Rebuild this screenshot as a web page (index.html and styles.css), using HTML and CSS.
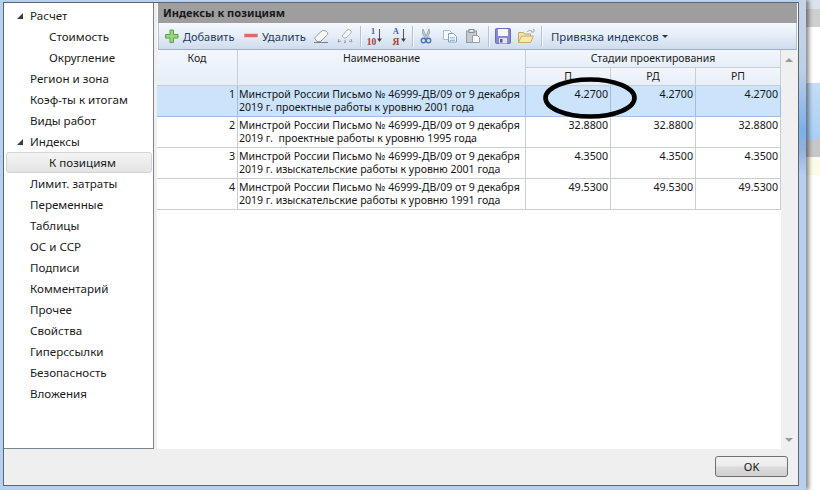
FILE: index.html
```html
<!DOCTYPE html>
<html lang="ru">
<head>
<meta charset="utf-8">
<title>Индексы к позициям</title>
<link rel="stylesheet" href="styles.css">
</head>
<body>
<div class="window">
  <div class="dialog">
    <div class="main">
      <nav class="tree">
        <div class="node"><span class="arrow"></span>Расчет</div>
        <div class="node child">Стоимость</div>
        <div class="node child">Округление</div>
        <div class="node">Регион и зона</div>
        <div class="node">Коэф-ты к итогам</div>
        <div class="node">Виды работ</div>
        <div class="node"><span class="arrow"></span>Индексы</div>
        <div class="node child current">К позициям</div>
        <div class="node">Лимит. затраты</div>
        <div class="node">Переменные</div>
        <div class="node">Таблицы</div>
        <div class="node">ОС и ССР</div>
        <div class="node">Подписи</div>
        <div class="node">Комментарий</div>
        <div class="node">Прочее</div>
        <div class="node">Свойства</div>
        <div class="node">Гиперссылки</div>
        <div class="node">Безопасность</div>
        <div class="node">Вложения</div>
      </nav>
      <section class="panel">
        <h1 class="panel-title">Индексы к позициям</h1>
        <div class="toolbar">
          <svg class="icon g-start" viewBox="0 0 16 16"><path d="M6 2h3.500v4.500H14V10H9.500v4.500H6V10H1.500V6.500H6z" fill="#9ad67a" stroke="#5fa04a"/></svg>
          <span class="label label-add">Добавить</span>
          <svg class="icon g8" viewBox="0 0 16 16"><rect x="1.500" y="6" width="13" height="3" fill="#e8605a" stroke="#d98a86" stroke-width=".6"/></svg>
          <span class="label label-del">Удалить</span>
          <svg class="icon g7" viewBox="0 0 16 16"><path d="M1.500 10l7-7q2-1 4.500 0l1.500 1.500q1 2-1 3l-6 6H4z" fill="#f6f6f6" stroke="#9a9fa6"/><path d="M1 14.500h14" stroke="#7b8088"/></svg>
          <svg class="icon g8" viewBox="0 0 16 16"><path d="M5 8l5-6q2-1 3 0l1 1q1 2-1 3l-4 4H7z" fill="#f6f6f6" stroke="#b0b4ba"/><path d="M2 11l-1 3 3-1M8 12v3M7 14l1 1 1-1M14 11l1 3-3-1" fill="none" stroke="#989da4"/></svg>
          <span class="sep g7"></span>
          <svg class="icon g5" viewBox="0 0 16 16"><text class="sort-a" x="7" y="6" text-anchor="middle">1</text><text class="sort-b" x="5.500" y="16.500" text-anchor="middle">10</text><path d="M13.500 1v10" stroke="#555"/><path d="M11 10.500h5l-2.500 3.500z" fill="#444"/></svg>
          <svg class="icon g9" viewBox="0 0 16 16"><text class="sort-a" x="5" y="6" text-anchor="middle">A</text><text class="sort-b" x="5" y="16.500" text-anchor="middle">Я</text><path d="M12.500 1v10" stroke="#555"/><path d="M10 10.500h5l-2.500 3.500z" fill="#444"/></svg>
          <span class="sep g5"></span>
          <svg class="icon g5" viewBox="0 0 16 16"><path d="M5 1l3 7 3-7 .6 4-2.500 5h-2.200L4.400 5z" fill="#c6ccd4" stroke="#8a929c" stroke-width=".7"/><circle cx="5.500" cy="12.500" r="2.200" fill="none" stroke="#4a74bc" stroke-width="1.400"/><circle cx="10.500" cy="12.500" r="2.200" fill="none" stroke="#4a74bc" stroke-width="1.400"/></svg>
          <svg class="icon g8" viewBox="0 0 16 16"><path d="M1.500 2.500h6l2 2v7h-8z" fill="#f6f9fd" stroke="#a8bcd2"/><path d="M6.500 5.500h5l3 3v5.500h-8z" fill="#fff" stroke="#7aa3d0"/><path d="M8 9.500h5M8 11h5M8 12.500h5" stroke="#a3c0e0"/></svg>
          <svg class="icon g7" viewBox="0 0 16 16"><rect x="1.500" y="3" width="10" height="11.500" fill="#c6cacf" stroke="#94999f"/><rect x="4" y="1.500" width="5" height="3" fill="#e2e4e6" stroke="#8b8f94"/><path d="M7.500 7.500h5l2 2v5h-7z" fill="#f8f8f8" stroke="#9a9fa5"/></svg>
          <span class="sep g7"></span>
          <svg class="icon g6" viewBox="0 0 16 16"><rect x=".5" y=".5" width="15" height="15" rx="1" fill="#8589d6" stroke="#6a6eb4"/><rect x="3" y="1" width="10" height="7" fill="#f4f5fc"/><rect x="4" y="10" width="8" height="5.500" fill="#e2e3ec"/><rect x="5" y="11" width="2.500" height="3.500" fill="#5a5d84"/></svg>
          <svg class="icon g7" viewBox="0 0 16 16"><path d="M.5 14.500v-10h5l1 1.500h6v2" fill="#f5e3a6" stroke="#c4ab6a"/><path d="M.5 14.500l3-6.500h12l-3 6.500z" fill="#f9e7ae" stroke="#c7ad6e"/><path d="M9 4q2-3 5-1l-1 1h3v-3l-1 1" fill="none" stroke="#9ab4d4"/></svg>
          <span class="sep g7"></span>
          <span class="label label-bind g9">Привязка индексов</span>
          <span class="caret"></span>
        </div>
        <div class="grid-area">
          <table class="grid">
            <colgroup>
              <col class="col-code"><col class="col-name"><col class="col-val"><col class="col-val"><col class="col-val">
            </colgroup>
            <thead>
              <tr class="head-top">
                <th rowspan="2">Код</th>
                <th rowspan="2">Наименование</th>
                <th colspan="3">Стадии проектирования</th>
              </tr>
              <tr class="head-sub">
                <th class="sub">П</th><th class="sub">РД</th><th class="sub">РП</th>
              </tr>
            </thead>
            <tbody>
              <tr class="selected">
                <td class="num">1</td>
                <td class="name">Минстрой России Письмо № 46999-ДВ/09 от 9 декабря 2019 г. проектные работы к уровню 2001 года</td>
                <td class="num">4.2700</td><td class="num">4.2700</td><td class="num">4.2700</td>
              </tr>
              <tr>
                <td class="num">2</td>
                <td class="name">Минстрой России Письмо № 46999-ДВ/09 от 9 декабря 2019 г.&nbsp; проектные работы к уровню 1995 года</td>
                <td class="num">32.8800</td><td class="num">32.8800</td><td class="num">32.8800</td>
              </tr>
              <tr>
                <td class="num">3</td>
                <td class="name">Минстрой России Письмо № 46999-ДВ/09 от 9 декабря 2019 г. изыскательские работы к уровню 2001 года</td>
                <td class="num">4.3500</td><td class="num">4.3500</td><td class="num">4.3500</td>
              </tr>
              <tr>
                <td class="num">4</td>
                <td class="name">Минстрой России Письмо № 46999-ДВ/09 от 9 декабря 2019 г. изыскательские работы к уровню 1991 года</td>
                <td class="num">49.5300</td><td class="num">49.5300</td><td class="num">49.5300</td>
              </tr>
            </tbody>
          </table>
          <div class="scrollbar">
            <span class="scroll-up"></span>
            <span class="scroll-down"></span>
          </div>
        </div>
      </section>
    </div>
    <footer class="footer">
      <button class="ok" type="button">OK</button>
    </footer>
  </div>
</div>
<div class="backdrop">
  <div class="bd bd-1"></div>
  <div class="bd bd-2"></div>
  <div class="bd bd-3"></div>
  <div class="bd bd-4"></div>
  <div class="bd bd-5"></div>
  <div class="bd bd-6"></div>
  <div class="bd bd-7"></div>
</div>
<svg class="mark" viewBox="0 0 94 42"><ellipse cx="47" cy="21" rx="44.500" ry="18.500" fill="none" stroke="#000" stroke-width="4.600"/></svg>
</body>
</html>
```
FILE: styles.css
```css
* { box-sizing: border-box; }
html, body { margin: 0; padding: 0; height: 490px; }
body {
  display: flex;
  width: 820px;
  overflow: hidden;
  background: #fff;
  font-family: "Noto Sans", "Liberation Sans", sans-serif;
  font-size: 11px;
  color: #1c1c1c;
}
.window {
  flex: none;
  width: 806px;
  height: 490px;
  padding: 2px 7px 4px 3px;
  background:
    linear-gradient(#c8d4e4 0, #bcd0ea 70px, #7eaee8 130px, #93b2d8 150px, #b7d0f0 175px) right top / 7px 100% no-repeat,
    #b7d0f0;
  box-shadow: 3px 0 4px rgba(0, 0, 0, .45);
  position: relative;
  z-index: 1;
}
.dialog {
  display: flex;
  flex-direction: column;
  height: 484px;
  border: 1px solid #5d6670;
  background: #efefef;
}
.main { display: flex; height: 446px; }
.tree {
  flex: none;
  width: 150px;
  padding-top: 2px;
  font-size: 11.6px;
  background: #fff;
  border-right: 1px solid #7d8490;
  border-bottom: 1px solid #7d8490;
}
.node {
  position: relative;
  height: 21px;
  line-height: 21px;
  padding-left: 26px;
  color: #1b1b1b;
}
.node.child { padding-left: 45px; }
.node.current {
  margin: 0 1px 0 2px;
  padding-left: 42px;
  border: 1px solid #d4d4d4;
  border-radius: 3px;
  line-height: 19px;
  background: linear-gradient(#f4f4f4, #e4e4e4);
}
.arrow {
  position: absolute;
  left: 13px;
  top: 8px;
  width: 0;
  height: 0;
  border-style: solid;
  border-width: 0 0 6px 6px;
  border-color: transparent transparent #3c3c3c transparent;
}
.panel {
  flex: none;
  width: 641px;
  margin-left: 3px;
  display: flex;
  flex-direction: column;
  background: #fff;
}
.panel-title {
  margin: 0 1px;
  height: 20px;
  padding-left: 5px;
  font-size: 11.1px;
  font-weight: 700;
  line-height: 20px;
  color: #1a1a1a;
  background: #9e9e9e;
}
.toolbar {
  display: flex;
  align-items: center;
  height: 27px;
  margin: 0 1px;
  padding-left: 5px;
  border-left: 1px solid #b4c2d4;
  border-right: 1px solid #b4c2d4;
  border-bottom: 1px solid #9fb0c6;
  background: linear-gradient(#f5f9fd, #e6eef8 45%, #cfdcee);
}
.icon { flex: none; width: 16px; height: 16px; overflow: visible; }
.sep { flex: none; width: 1px; height: 21px; background: #b3c2d6; box-shadow: 1px 0 0 #f4f8fc; }
.g-start { margin-left: 0; }
.g5 { margin-left: 5px; }
.g6 { margin-left: 6px; }
.g7 { margin-left: 7px; }
.g8 { margin-left: 8px; }
.g9 { margin-left: 9px; }
.label { flex: none; color: #1e395b; white-space: nowrap; }
.label-add { margin-left: 3px; width: 52px; }
.label-del { margin-left: 3px; width: 44px; font-size: 11.3px; }
.label-bind { width: 106px; font-size: 11.4px; }
.caret {
  flex: none;
  margin-left: 5px;
  width: 0;
  height: 0;
  border-style: solid;
  border-width: 3px 3px 0;
  border-color: #1e395b transparent transparent;
}
.sort-a { font-family: "Liberation Serif", serif; font-size: 8px; font-weight: 700; fill: #3c5ea6; }
.sort-b { font-family: "Liberation Serif", serif; font-size: 9.5px; font-weight: 700; fill: #a83c34; }
.grid-area { flex: 1; display: flex; min-height: 0; }
.grid {
  flex: none;
  width: 624px;
  height: 160px;
  table-layout: fixed;
  border-collapse: separate;
  border-spacing: 0;
  font-size: 10.7px;
}
.col-code { width: 81px; }
.col-name { width: 288px; }
.col-val { width: 85px; }
.grid th {
  padding: 0;
  vertical-align: top;
  font-size: 10.5px;
  font-weight: 400;
  line-height: 17px;
  color: #1c1c1c;
  background: linear-gradient(#f3f7fc, #e6eef8);
  border-right: 1px solid #c9ced4;
  border-bottom: 1px solid #c9ced4;
}
.head-top th, .head-sub th { height: 18px; }
.grid td {
  height: 31px;
  padding: 2px 2px 0;
  vertical-align: top;
  line-height: 13px;
  border-right: 1px solid #c9ced4;
  border-bottom: 1px solid #c9ced4;
  color: #161616;
}
.grid td.name { padding: 2px 1px 0 1px; font-size: 10.55px; }
.num { text-align: right; }
.selected td {
  background: #cbe3fb;
  border-right-color: #a3bedd;
  border-bottom-color: #a3bedd;
}
.scrollbar {
  flex: none;
  width: 17px;
  position: relative;
  background: #f0f0f0;
}
.scroll-up, .scroll-down {
  position: absolute;
  left: 4px;
  width: 0;
  height: 0;
  border-style: solid;
}
.scroll-up {
  top: 8px;
  border-width: 0 4px 4px;
  border-color: transparent transparent #9a9a9a;
}
.scroll-down {
  bottom: 7px;
  border-width: 4px 4px 0;
  border-color: #9a9a9a transparent transparent;
}
.footer {
  flex: 1;
  display: flex;
  justify-content: flex-end;
  align-items: flex-start;
  padding: 7px 10px 0 0;
}
.ok {
  width: 73px;
  height: 21px;
  padding: 0;
  font: inherit;
  color: #111;
  border: 1px solid #707070;
  border-radius: 3px;
  background: linear-gradient(#f2f2f2 0, #ebebeb 48%, #dcdcdc 52%, #cfcfcf 100%);
}
.backdrop { flex: 1; display: flex; flex-direction: column; }
.bd-1 { height: 9px; background: #dbe3ec; }
.bd-2 { height: 18px; background: #cfcfcf; }
.bd-3 { height: 56px; background: #fff; }
.bd-4 { height: 57px; background: linear-gradient(#c5dcf5, #a9cff5); }
.bd-5 { height: 17px; background: #c6c6c6; }
.bd-6 { height: 18px; background: #fbfbe8; }
.bd-7 { flex: 1; background: #fff; }
.mark {
  position: absolute;
  left: 543px;
  top: 77px;
  width: 94px;
  height: 42px;
  z-index: 2;
}
```
